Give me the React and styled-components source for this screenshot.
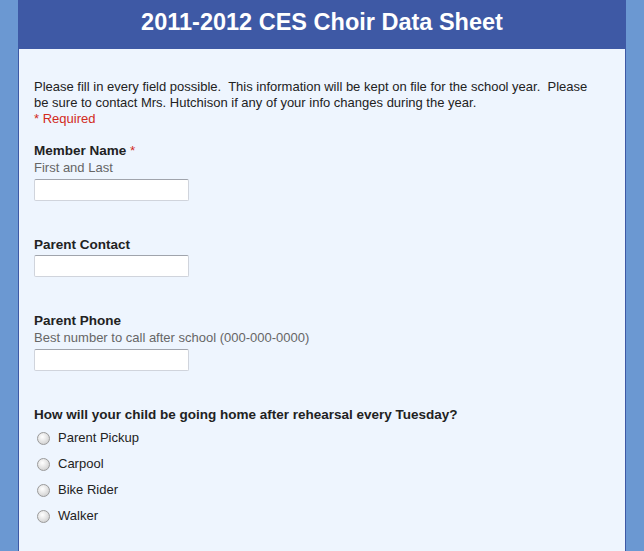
import React from 'react';
import styled, { createGlobalStyle } from 'styled-components';

const GlobalStyle = createGlobalStyle`
  html, body {
    margin: 0;
    padding: 0;
    background: #6b98d2;
    font-family: "Liberation Sans", Arial, sans-serif;
  }
`;

const Page = styled.div`
  width: 608px;
  margin-left: 18px;
  min-height: 551px;
  background: #eef5fe;
  border-left: 1px solid #3e59a5;
  border-right: 1px solid #3e59a5;
  box-sizing: border-box;
`;

const Header = styled.h1`
  margin: 0;
  height: 49px;
  background: #3e59a5;
  color: #ffffff;
  font-size: 23.5px;
  font-weight: bold;
  text-align: center;
  line-height: 44px;
`;

const Body = styled.div`
  padding: 30px 15px 20px 15px;
  font-size: 13px;
  color: #222222;
`;

const Intro = styled.p`
  margin: 0;
  max-width: 562px;
  line-height: 16px;
  white-space: pre-wrap;
`;

const RequiredNote = styled.div`
  color: #d22a1c;
  line-height: 16px;
`;

const Field = styled.div`
  margin-top: ${(p) => p.$top}px;
`;

const Label = styled.div`
  font-weight: bold;
  font-size: 13.5px;
  line-height: 16px;
`;

const Star = styled.span`
  color: #d22a1c;
  font-weight: normal;
`;

const Help = styled.div`
  color: #666666;
  line-height: 18px;
`;

const TextInput = styled.input`
  display: block;
  margin-top: 2px;
  width: 155px;
  height: 22px;
  box-sizing: border-box;
  border: 1px solid #d0d4dc;
  border-top-color: #a0a4ac;
  border-radius: 2px;
  background: #ffffff;
  font-family: inherit;
  font-size: 13px;
  padding: 2px 4px;
`;

const Options = styled.div`
  display: flex;
  flex-direction: column;
  gap: 10px;
  margin-top: 6px;
`;

const Option = styled.label`
  display: flex;
  align-items: center;
  gap: 8px;
  height: 16px;
  padding-left: 3px;
`;

const Radio = styled.span`
  width: 13px;
  height: 13px;
  border-radius: 50%;
  box-sizing: border-box;
  border: 1px solid #9a9a9a;
  background: radial-gradient(circle at 40% 35%, #ffffff 0%, #e6e6e6 45%, #c4c4c4 100%);
  margin-top: 2px;
`;

const fields = [
  { label: 'Member Name', required: true, help: 'First and Last', top: 16 },
  { label: 'Parent Contact', top: 36 },
  { label: 'Parent Phone', help: 'Best number to call after school (000-000-0000)', top: 36 },
];

const choices = ['Parent Pickup', 'Carpool', 'Bike Rider', 'Walker'];

export default function App() {
  return (
    <>
      <GlobalStyle />
      <Page>
        <Header>2011-2012 CES Choir Data Sheet</Header>
        <Body>
          <Intro>
            {'Please fill in every field possible.  This information will be kept on file for the school year.  Please be sure to contact Mrs. Hutchison if any of your info changes during the year.'}
          </Intro>
          <RequiredNote>* Required</RequiredNote>
          {fields.map((f) => (
            <Field key={f.label} $top={f.top}>
              <Label>
                {f.label} {f.required && <Star>*</Star>}
              </Label>
              {f.help && <Help>{f.help}</Help>}
              <TextInput type="text" />
            </Field>
          ))}
          <Field $top={36}>
            <Label>How will your child be going home after rehearsal every Tuesday?</Label>
            <Options>
              {choices.map((c) => (
                <Option key={c}>
                  <Radio />
                  {c}
                </Option>
              ))}
            </Options>
          </Field>
        </Body>
      </Page>
    </>
  );
}
